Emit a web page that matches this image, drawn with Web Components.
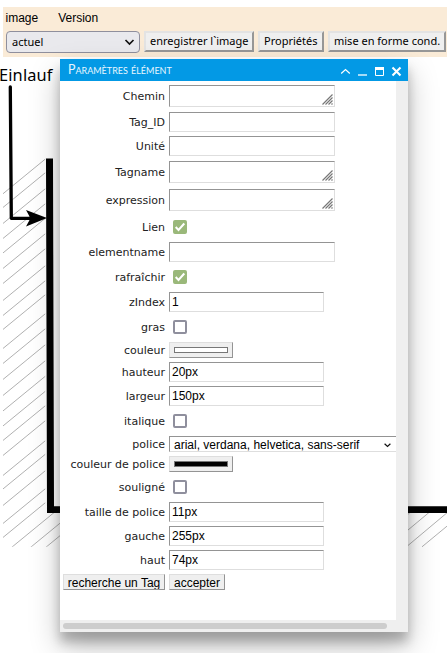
<!DOCTYPE html>
<html lang="fr">
<head>
<meta charset="utf-8">
<title>Paramètres élément</title>
<style>
html,body{margin:0;height:100%;overflow:hidden;background:#fff}
</style>
</head>
<body>
<editor-page></editor-page>
<script>
const define = (name, html, setup) => customElements.define(name, class extends HTMLElement {
  connectedCallback() {
    if (this.shadowRoot) return;
    const t = document.createElement('template');
    t.innerHTML = html;
    this.attachShadow({mode: 'open'}).append(t.content.cloneNode(true));
    if (setup) setup(this, this.shadowRoot);
  }
});

/* Tank drawing: hatched ground, wall, inlet pipe with arrow */
define('tank-drawing', `<style>:host{display:block;width:447px;height:653px}svg{display:block}</style>
<svg width="447" height="653" viewBox="0 0 447 653">
<defs><clipPath id="c"><path d="M3 158H45.2V512H70V546.800H3Z"/></clipPath></defs>
<g id="h" clip-path="url(#c)" stroke="#8e8e8e" stroke-width=".7"></g>
<path d="M405 517L410 512.500M405 532.500L429 512.500M405 548L447 512.800M422 546.800L449 524.500" stroke="#8e8e8e" stroke-width=".7"/>
<path d="M46 158.500H53L54 506.200L447 506.200V513H47Z" fill="#000"/>
<path d="M10.300 87L11.300 218.300H36" fill="none" stroke="#000" stroke-width="3.300" stroke-linecap="round" stroke-linejoin="round"/>
<path d="M26 210L47 218L26 226.500L30.500 218.300Z" fill="#000"/>
<text x="-1" y="80.500" font-family="Noto Sans,sans-serif" font-size="16.400" textLength="53.500">Einlauf</text>
</svg>`, (el, root) => {
  const g = root.getElementById('h');
  const ends = [159.300, 173, 189, 204, 218.500, 234, 249, 266, 281, 295, 314, 329, 345, 361, 376.500, 391.500, 406, 421, 441, 454.500, 471, 489, 503, 520, 535.500, 548];
  for (const y of ends) {
    const l = document.createElementNS('http://www.w3.org/2000/svg', 'path');
    l.setAttribute('d', `M0 ${y + 45 * .82}L75 ${y - 30 * .82}`);
    g.append(l);
  }
});

define('tool-button', `<style>
:host{display:block;box-sizing:border-box;height:21px;padding:0 5px 0 4px;border:2px solid;border-color:#e3e3e3 #979797 #979797 #e3e3e3;background:#efefef;font:11px/16px "Noto Sans",sans-serif;color:#000;white-space:nowrap;text-align:center}
</style><slot></slot>`);

define('version-select', `<style>
:host{display:flex;box-sizing:border-box;width:134px;height:22px;border:1px solid #8f8f9d;border-radius:4px;background:#e9e9ed;align-items:center;justify-content:space-between;padding:0 4px 1px 5px;font:11px/18px "Noto Sans",sans-serif}
</style><slot></slot><svg width="11" height="8" viewBox="0 0 11 8"><path d="M1.500 2L5.500 6L9.500 2" fill="none" stroke="#111" stroke-width="1.700"/></svg>`);

define('tool-bar', `<style>
:host{display:block;box-sizing:border-box;height:50px;background:#faebd7;padding:4px 0 0 3px;font:12px/14px "Liberation Sans",Arial,sans-serif}
nav{display:flex;gap:20px;height:20px;margin-left:-.5px}
div{display:flex;gap:4px}
</style><nav><span>image</span><span>Version</span></nav>
<div><version-select>actuel</version-select><tool-button style="width:110px">enregistrer l\`image</tool-button><tool-button style="width:66px">Propriétés</tool-button><tool-button style="width:118px">mise en forme cond.</tool-button></div>`);

define('form-row', `<style>
:host{display:flex;align-items:center;height:var(--h);margin-top:var(--g);font:11px/16px "DejaVu Sans",sans-serif;color:#222}
span{box-sizing:border-box;height:18px;padding-top:2px;width:105px;text-align:right;margin-right:4px;white-space:nowrap;flex:none}
</style><span></span><slot></slot>`, (el, root) => {
  el.style.setProperty('--h', el.getAttribute('h') + 'px');
  el.style.setProperty('--g', el.getAttribute('gap') + 'px');
  root.querySelector('span').textContent = el.getAttribute('label');
});

define('text-field', `<style>
:host{display:flex;box-sizing:border-box;flex:none;width:155px;height:20px;border:1px solid;border-color:#949494 #dedede #dedede #949494;background:#fff;padding:0 2px;font:12px/18px "Liberation Sans",Arial,sans-serif;color:#000;white-space:nowrap}
:host([wide]){width:166px}
:host([area]){height:22px;justify-content:flex-end;align-items:flex-end;padding:0 1px 1px 0}
:host([list]){width:233px;height:16px;padding:2px 10px 0 4px;line-height:14px;align-items:center;justify-content:space-between}
svg{display:none;flex:none}
:host([area]) .grip,:host([list]) .arrow{display:block}
</style><slot></slot>
<svg class="grip" width="11" height="11" viewBox="0 0 11 11"><path d="M.5 10.500L10.500 .5M3.500 10.500L10.500 3.500M6.500 10.500L10.500 6.500M9.500 10.500L10.500 9.500" stroke="#777" stroke-width="1.150"/></svg>
<svg class="arrow" width="7" height="5" viewBox="0 0 7 5"><path d="M.6 .7L3.500 3.500L6.400 .7" fill="none" stroke="#111" stroke-width="1.200"/></svg>`);

define('check-box', `<style>
:host{display:block;box-sizing:border-box;width:14px;height:14px;margin-left:4px;border:2px solid #8f8f9d;border-radius:2px;background:#fff}
:host([checked]){border-color:#9ab87a;background:#9ab87a}
svg{display:none;margin:-2px}:host([checked]) svg{display:block}
</style><svg width="14" height="14" viewBox="0 0 14 14"><path d="M2.700 7L5.500 10L11.300 3.500" fill="none" stroke="#fff" stroke-width="2"/></svg>`);

define('color-well', `<style>
:host{display:block;box-sizing:border-box;width:64px;height:16px;padding:4px;border:1px solid;border-color:#dedede #949494 #949494 #dedede;background:#efefef}
i{display:block;box-sizing:border-box;height:6px;border:1px solid #777;background:var(--c)}
</style><i></i>`);

define('form-button', `<style>
:host{display:block;box-sizing:border-box;height:16px;border:1px solid;border-color:#dedede #949494 #949494 #dedede;background:#efefef;font:12px/16px "Liberation Sans",Arial,sans-serif;text-align:center;white-space:nowrap;color:#000;overflow:hidden}
</style><slot></slot>`);

define('panel-window', `<style>
:host{display:flex;flex-direction:column;width:348px;height:573px;background:#fff;box-shadow:0 14px 28px rgba(0,0,0,.25),0 10px 10px rgba(0,0,0,.22)}
header{display:flex;justify-content:space-between;height:22px;flex:none;background:#0399e5;color:#e8f6fe;padding:0 4px 0 8px}
h1{margin:0;font:400 12.400px/22px Lato,sans-serif;font-variant:small-caps;white-space:nowrap}
main{display:flex;flex:1;min-height:0}
.body{flex:1;min-width:0;overflow:hidden}
.vs{width:12px;flex:none;background:#efefef}
footer{display:flex;align-items:center;height:12px;background:#efefef;padding-left:3px}
footer i{width:324px;height:6px;border-radius:3px;background:#cdcdcd}
</style><header><h1><slot name="title"></slot></h1>
<svg width="66" height="22" viewBox="0 0 66 22" fill="none" stroke="#fff"><path d="M3.200 14.500L7.500 10.500L11.800 14.500" stroke-width="1.200"/><path d="M20 16H29" stroke-width="1.300"/><path d="M37.500 9V16.500H45.500V9" stroke-width="1"/><path d="M37 9.500H46" stroke-width="3"/><path d="M54.500 8.500L62.500 16.500M62.500 8.500L54.500 16.500" stroke-width="2.100"/></svg></header>
<main><div class="body"><slot></slot></div><div class="vs"></div></main><footer><i></i></footer>`);

define('editor-page', `<style>
:host{display:block;position:relative;width:447px;height:653px;overflow:hidden}
tank-drawing{position:absolute;left:0;top:0}
tool-bar{position:relative;margin-left:3px}
.page{padding-top:7px}
panel-window{position:absolute;left:60px;top:59px}
.actions{display:flex;gap:4px;margin:4px 0 0 3px}
</style><tank-drawing></tank-drawing><div class="page"><tool-bar></tool-bar></div>
<panel-window><span slot="title">Paramètres élément</span>
<form-row h="22" gap="4" label="Chemin"><text-field wide area></text-field></form-row>
<form-row h="20" gap="5" label="Tag_ID"><text-field wide></text-field></form-row>
<form-row h="20" gap="4" label="Unité"><text-field wide></text-field></form-row>
<form-row h="22" gap="5" label="Tagname"><text-field wide area></text-field></form-row>
<form-row h="22" gap="6" label="expression"><text-field wide area></text-field></form-row>
<form-row h="14" gap="9" label="Lien"><check-box checked></check-box></form-row>
<form-row h="20" gap="8" label="elementname"><text-field wide></text-field></form-row>
<form-row h="14" gap="8" label="rafraîchir"><check-box checked></check-box></form-row>
<form-row h="20" gap="8" label="zIndex"><text-field>1</text-field></form-row>
<form-row h="14" gap="8" label="gras"><check-box></check-box></form-row>
<form-row h="16" gap="8" label="couleur"><color-well style="--c:#fff"></color-well></form-row>
<form-row h="20" gap="4" label="hauteur"><text-field>20px</text-field></form-row>
<form-row h="20" gap="4" label="largeur"><text-field>150px</text-field></form-row>
<form-row h="14" gap="8" label="italique"><check-box></check-box></form-row>
<form-row h="16" gap="8" label="police"><text-field list>arial, verdana, helvetica, sans-serif</text-field></form-row>
<form-row h="16" gap="4" label="couleur de police"><color-well style="--c:#000"></color-well></form-row>
<form-row h="14" gap="8" label="souligné"><check-box></check-box></form-row>
<form-row h="20" gap="8" label="taille de police"><text-field>11px</text-field></form-row>
<form-row h="20" gap="4" label="gauche"><text-field>255px</text-field></form-row>
<form-row h="20" gap="4" label="haut"><text-field>74px</text-field></form-row>
<div class="actions"><form-button style="width:102px">recherche un Tag</form-button><form-button style="width:56px">accepter</form-button></div>
</panel-window>`);
</script>
</body>
</html>
